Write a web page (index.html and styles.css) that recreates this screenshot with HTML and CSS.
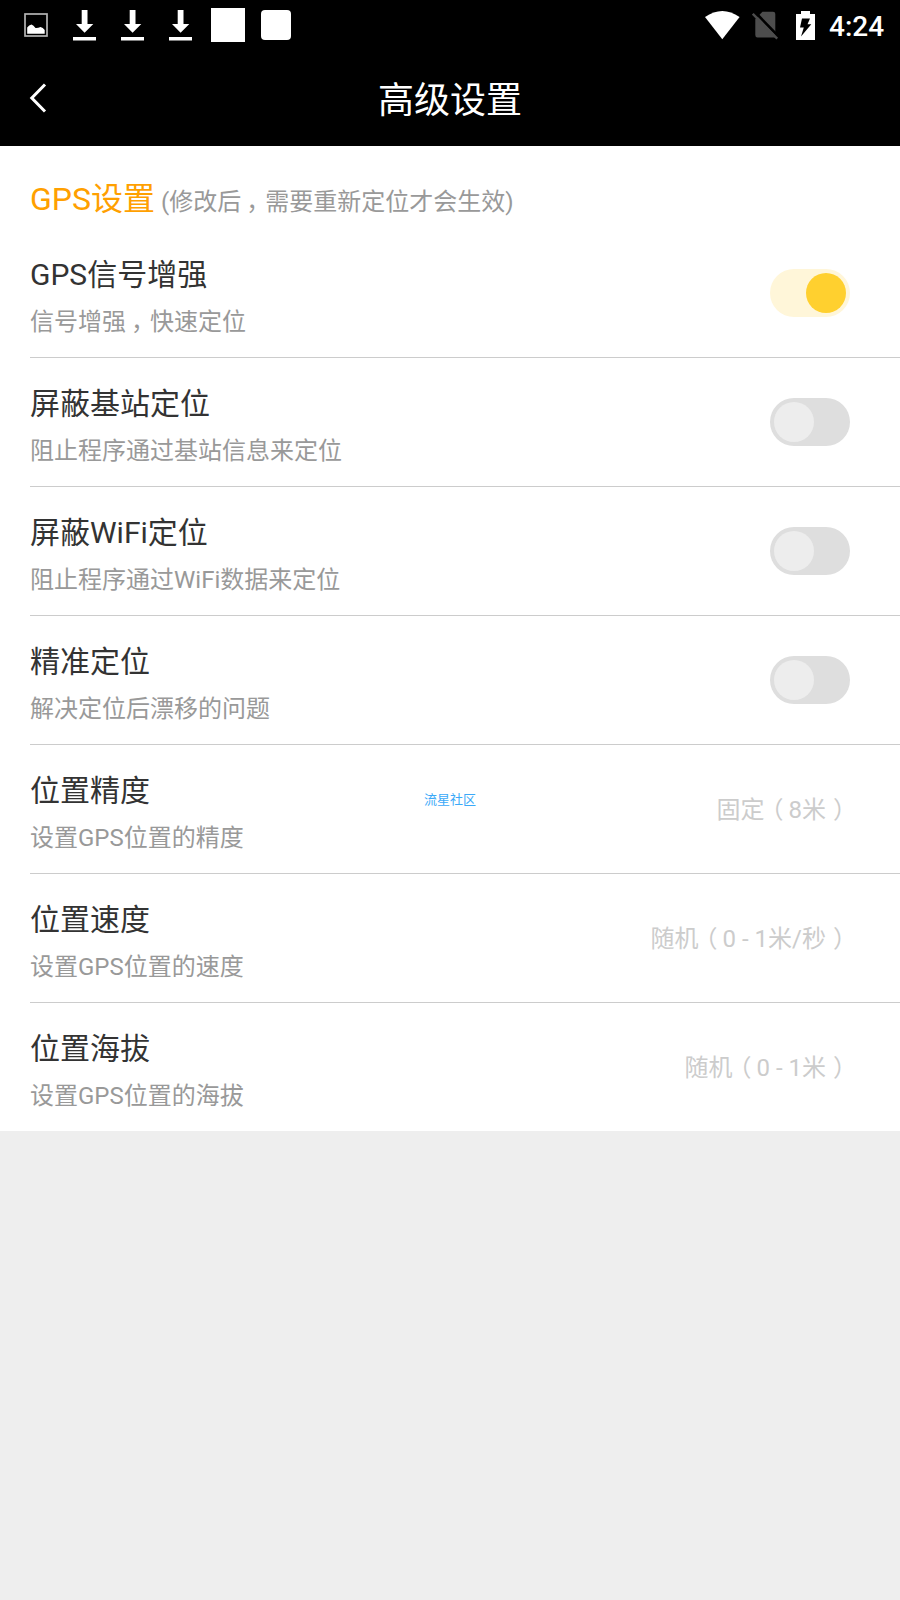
FILE: index.html
```html
<!DOCTYPE html>
<html lang="zh-CN">
<head>
<meta charset="utf-8">
<title>高级设置</title>
<link rel="stylesheet" href="styles.css">
</head>
<body>
<header class="header">
  <div class="status">
    <div class="notifications">
      <svg class="icon" width="24" height="24" viewBox="0 0 24 24"><rect x="1" y="1" width="22" height="22" fill="none" stroke="#b4b4b4" stroke-width="1.7"/><path d="M3.2 20.7V14.5Q5 11.8 7.5 11.5Q9.5 12 11.5 15Q14 15.2 16.5 14Q19 14.5 20.7 17V20.7Z" fill="#fff"/></svg>
      <svg class="icon" width="23" height="31" viewBox="0 0 23 31"><path d="M8.7 0h5.8v14h5.8L11.6 22.7 3 14h5.7zM0 27h23v3.6H0z" fill="#fff"/></svg>
      <svg class="icon" width="23" height="31" viewBox="0 0 23 31"><path d="M8.7 0h5.8v14h5.8L11.6 22.7 3 14h5.7zM0 27h23v3.6H0z" fill="#fff"/></svg>
      <svg class="icon" width="23" height="31" viewBox="0 0 23 31"><path d="M8.7 0h5.8v14h5.8L11.6 22.7 3 14h5.7zM0 27h23v3.6H0z" fill="#fff"/></svg>
      <span class="block"></span>
      <span class="block rounded"></span>
    </div>
    <div class="system">
      <svg class="wifi" width="35" height="29" viewBox="0 0 35 29"><path d="M0 6Q17.3-6 34.6 6L17.3 28.3Z" fill="#fff"/></svg>
      <svg class="sim" width="27" height="29" viewBox="0 0 27 29"><path d="M10.5.8H21Q23.3.8 23.3 3V26.5H5.5Q3.3 26.5 3.3 24V8Z" fill="#4d4d4d"/><path d="M3 1L27 26" stroke="#000" stroke-width="2.6"/><path d="M.8 2.8L25.2 27.6" stroke="#4d4d4d" stroke-width="2.4"/></svg>
      <svg class="battery" width="19" height="29" viewBox="0 0 19 29"><path d="M5 0h9v3h5v26H0V3h5z" fill="#fff"/><path d="M6 7.5H14L11.5 13.2H15.3L5 25.5L7.8 16.5H4Z" fill="#000"/></svg>
      <span class="time">4:24</span>
    </div>
  </div>
  <div class="appbar">
    <svg class="back" width="18" height="30" viewBox="0 0 18 30"><path d="M16 1.5L2.8 15L16 28.5" fill="none" stroke="#fff" stroke-width="3"/></svg>
    <h1 class="title">高级设置</h1>
  </div>
</header>
<main class="panel">
  <div class="section"><span class="section-name">GPS设置</span><span class="section-note">(修改后<span class="comma">，</span>需要重新定位才会生效)</span></div>
  <div class="row">
    <div class="text"><div class="name">GPS信号增强</div><div class="desc">信号增强<span class="comma">，</span>快速定位</div></div>
    <span class="switch on"><span class="knob"></span></span>
  </div>
  <div class="row">
    <div class="text"><div class="name">屏蔽基站定位</div><div class="desc">阻止程序通过基站信息来定位</div></div>
    <span class="switch"><span class="knob"></span></span>
  </div>
  <div class="row">
    <div class="text"><div class="name">屏蔽WiFi定位</div><div class="desc">阻止程序通过WiFi数据来定位</div></div>
    <span class="switch"><span class="knob"></span></span>
  </div>
  <div class="row">
    <div class="text"><div class="name">精准定位</div><div class="desc">解决定位后漂移的问题</div></div>
    <span class="switch"><span class="knob"></span></span>
  </div>
  <div class="row">
    <div class="text"><div class="name">位置精度</div><div class="desc">设置GPS位置的精度</div></div>
    <div class="value">固定<span class="paren">（</span>8米<span class="paren">）</span></div>
  </div>
  <div class="row">
    <div class="text"><div class="name">位置速度</div><div class="desc">设置GPS位置的速度</div></div>
    <div class="value">随机<span class="paren">（</span>0 - 1米/秒<span class="paren">）</span></div>
  </div>
  <div class="row">
    <div class="text"><div class="name">位置海拔</div><div class="desc">设置GPS位置的海拔</div></div>
    <div class="value">随机<span class="paren">（</span>0 - 1米<span class="paren">）</span></div>
  </div>
</main>
<div class="watermark">流星社区</div>
</body>
</html>
```
FILE: styles.css
```css
* { box-sizing: border-box; }
body {
  margin: 0;
  min-height: 1600px;
  background: #eee;
  font-family: Roboto, "Noto Sans CJK SC", sans-serif;
  position: relative;
}
svg { display: block; flex: none; }

.header { height: 146px; background: #000; color: #fff; }
.status {
  height: 50px;
  padding: 0 16px 0 24px;
  display: flex;
  justify-content: space-between;
  align-items: center;
}
.notifications { display: flex; align-items: center; gap: 25px; }
.block { width: 34px; height: 34px; background: #fff; margin-left: -6px; }
.rounded { width: 30px; height: 30px; border-radius: 4px; margin-left: -9px; }
.system { display: flex; align-items: center; height: 50px; }
.wifi { margin-right: 12px; }
.sim { margin-right: 17px; }
.battery { margin-right: 14px; }
.time { font-size: 28px; font-weight: 500; line-height: 48px; width: 55px; padding-top: 4px; }

.appbar {
  height: 96px;
  padding-left: 29px;
  display: grid;
  grid-template-columns: 18px 1fr 47px;
  align-items: center;
}
.title {
  margin: 0;
  padding-top: 6px;
  font-size: 36px;
  font-weight: 400;
  line-height: 90px;
  text-align: center;
}

.panel { background: #fff; height: 985px; }
.section {
  height: 83px;
  padding: 29px 0 0 30px;
  display: flex;
  align-items: baseline;
  line-height: 48px;
}
.section-name { color: #ffa000; font-size: 32px; }
.section-note { color: #999; font-size: 24px; margin-left: 6px; padding-top: 1px; }

.row {
  height: 129px;
  margin-left: 30px;
  padding-right: 50px;
  border-bottom: 1px solid #ccc;
  display: flex;
  justify-content: space-between;
  align-items: center;
}
.row:last-child { border-bottom-color: transparent; }
.text { padding-top: 10px; }
.name { font-size: 30px; line-height: 48px; color: #333; }
.desc { font-size: 24px; line-height: 46px; color: #999; }
.value { font-size: 24px; line-height: 48px; color: #ccc; white-space: nowrap; padding-top: 2px; }

.switch { width: 80px; height: 48px; padding: 4px; border-radius: 24px; background: #dedede; display: flex; }
.knob { width: 40px; height: 40px; border-radius: 50%; background: #ededed; }
.on { background: #fff6d9; justify-content: flex-end; }
.on .knob { background: #ffd02f; }

/* Half-width alternates, padded so the mark is centred in a full cell */
.comma, .paren { font-feature-settings: "halt"; text-spacing-trim: space-all; }
.comma { padding: 0 7px 0 5px; }
.paren { padding: 0 5px 0 7px; }

.watermark {
  position: absolute;
  left: 424px;
  top: 791px;
  font-size: 13px;
  line-height: 18px;
  color: #3ba9f8;
}
```
